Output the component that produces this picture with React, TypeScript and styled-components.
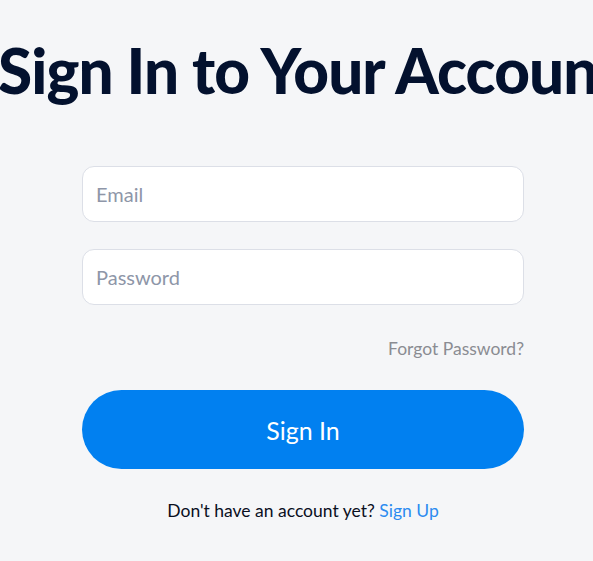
import React from "react";
import styled, { createGlobalStyle } from "styled-components";

const GlobalStyle = createGlobalStyle`
  html, body {
    margin: 0;
    padding: 0;
    background: #f5f6f8;
    font-family: "Lato", "Inter", sans-serif;
    overflow: hidden;
  }
`;

const Page = styled.div`
  width: 593px;
  height: 561px;
  display: flex;
  flex-direction: column;
  overflow: hidden;
`;

const Heading = styled.h1`
  margin: 30px 0 0 -2px;
  font-family: "Lato", sans-serif;
  font-weight: 900;
  font-size: 62px;
  line-height: 80px;
  letter-spacing: -0.9px;
  color: #03112e;
  white-space: nowrap;
`;

const Form = styled.form`
  width: 442px;
  margin: 56px 0 0 82px;
  display: flex;
  flex-direction: column;
`;

const Input = styled.input`
  box-sizing: border-box;
  width: 100%;
  height: 56px;
  padding: 0 13px;
  border: 1px solid #dcdfe7;
  border-radius: 12px;
  background: #ffffff;
  font-family: "Lato", sans-serif;
  font-size: 20px;
  color: #03112e;
  outline: none;

  & + & {
    margin-top: 27px;
  }

  &::placeholder {
    color: #8e96a8;
  }
`;

const Forgot = styled.a`
  align-self: flex-end;
  margin-top: 33px;
  font-size: 17.5px;
  line-height: 22px;
  color: #8a8c92;
  text-decoration: none;
`;

const SubmitButton = styled.button`
  margin-top: 30px;
  height: 79px;
  border: none;
  border-radius: 40px;
  background: #0180f0;
  color: #ffffff;
  font-family: "Lato", sans-serif;
  font-size: 25px;
  cursor: pointer;
`;

const Footer = styled.p`
  margin: 31px 0 0;
  text-align: center;
  font-size: 17.5px;
  line-height: 22px;
  color: #0a0f1e;
`;

const Link = styled.a`
  color: #2b8bf0;
  text-decoration: none;
`;

export default function App() {
  return (
    <>
      <GlobalStyle />
      <Page>
        <Heading>Sign In to Your Account</Heading>
        <Form onSubmit={(e) => e.preventDefault()}>
          <Input type="email" placeholder="Email" />
          <Input type="password" placeholder="Password" />
          <Forgot href="#">Forgot Password?</Forgot>
          <SubmitButton type="submit">Sign In</SubmitButton>
          <Footer>
            Don't have an account yet? <Link href="#">Sign Up</Link>
          </Footer>
        </Form>
      </Page>
    </>
  );
}
